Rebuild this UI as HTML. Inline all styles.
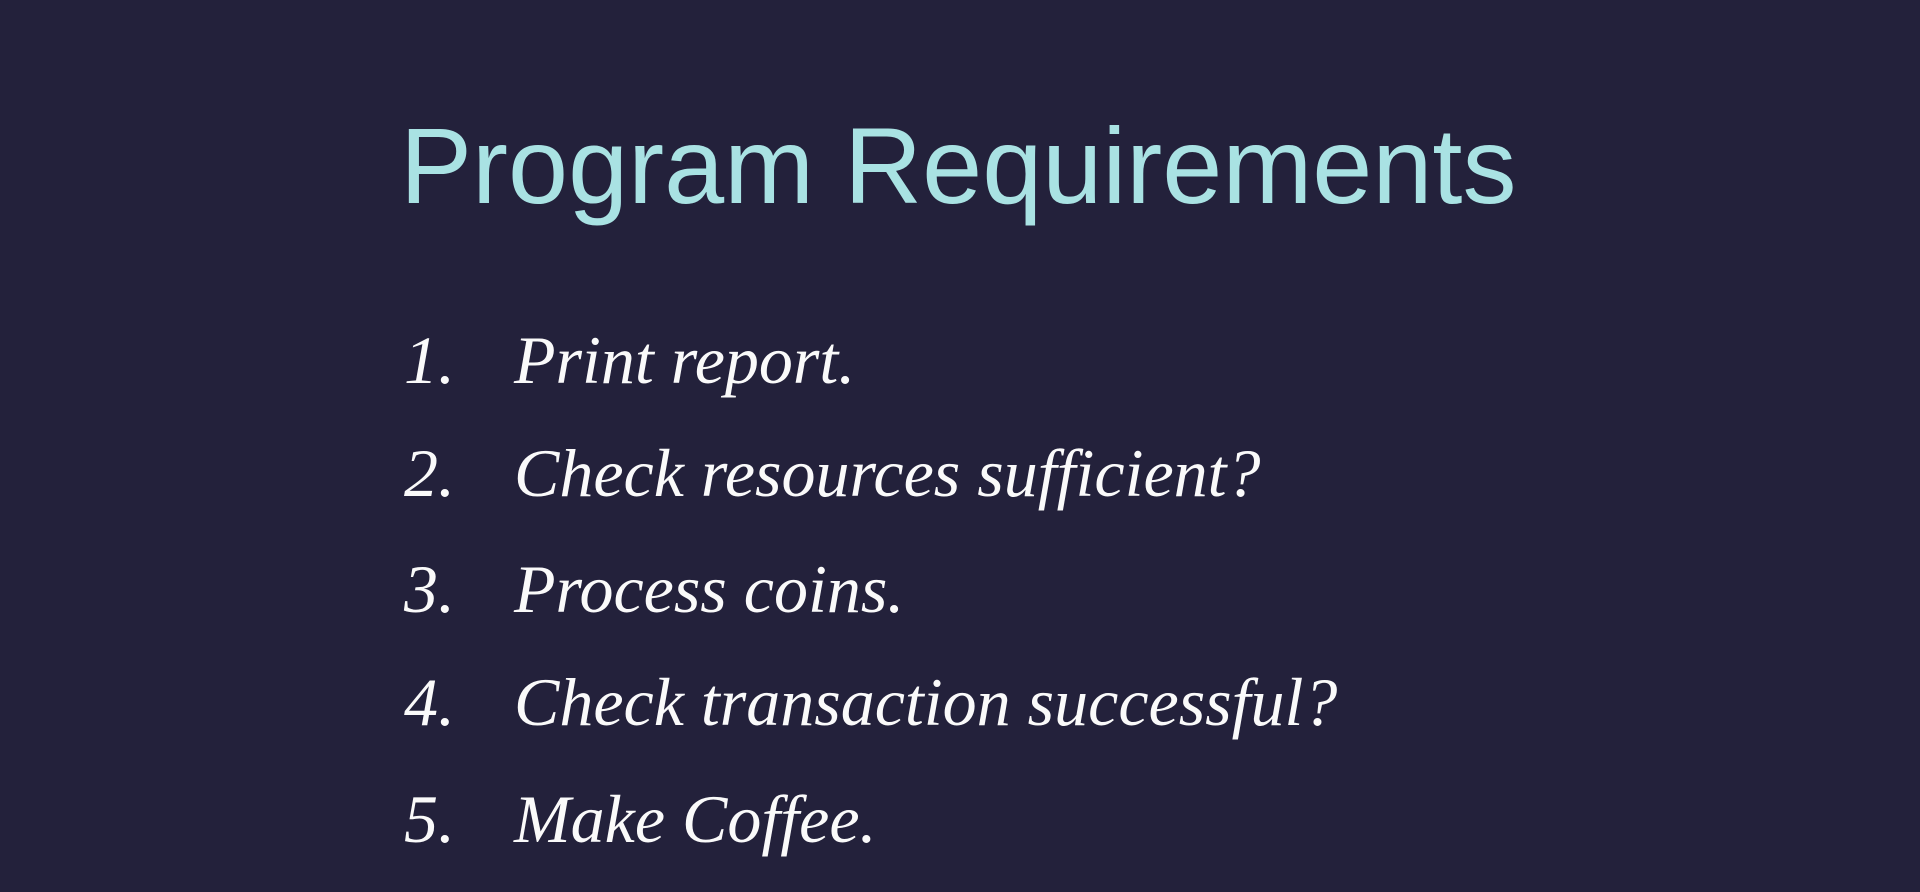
<!DOCTYPE html>
<html><head><meta charset="utf-8"><style>
html,body{margin:0;padding:0;}
body{width:1920px;height:892px;background:#23213b;overflow:hidden;position:relative;font-family:"Liberation Sans",sans-serif;}
.t{position:absolute;left:400px;top:112px;font-size:108px;color:#a9e2e3;line-height:1;white-space:nowrap;}
.i{position:absolute;color:#fafafa;font-size:68px;line-height:1;white-space:nowrap;font-family:"Liberation Serif",serif;font-style:italic;}
.n{position:absolute;left:404px;}
.x{position:absolute;left:514px;}
</style></head><body>
<div class="t">Program Requirements</div>
<div class="i" style="top:326px"><span class="n">1.</span><span class="x">Print report.</span></div>
<div class="i" style="top:439px"><span class="n">2.</span><span class="x">Check resources sufficient?</span></div>
<div class="i" style="top:555px"><span class="n">3.</span><span class="x">Process coins.</span></div>
<div class="i" style="top:668px"><span class="n">4.</span><span class="x">Check transaction successful?</span></div>
<div class="i" style="top:785px"><span class="n">5.</span><span class="x">Make Coffee.</span></div>
</body></html>
